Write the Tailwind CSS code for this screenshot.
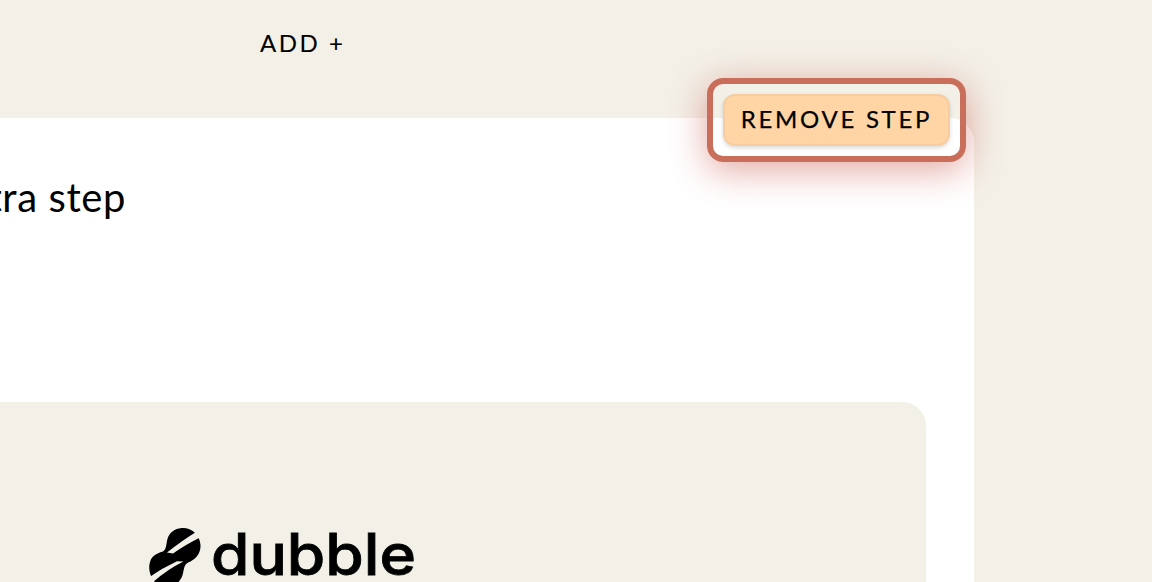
<!DOCTYPE html>
<html lang="en">
<head>
    <meta charset="UTF-8">
    <meta name="viewport" content="width=device-width, initial-scale=1.0">
    <title>Edit steps</title>
    <script src="https://cdn.jsdelivr.net/npm/@tailwindcss/browser@4"></script>
</head>
<body class="bg-[#f3f0e8] text-black overflow-hidden font-['Lato',sans-serif]">
    <div class="relative w-full h-[582px] overflow-hidden flex flex-col">

        <!-- Add step -->
        <header class="h-[118px] shrink-0 flex items-start pl-[260px] pt-[27px]">
            <button class="text-[24px] leading-8 tracking-[2.5px] font-normal whitespace-nowrap [-webkit-text-stroke:0.1px_black]">ADD +</button>
        </header>

        <!-- Step card -->
        <main class="w-[974px] flex-1 bg-white rounded-tr-3xl flex flex-col">
            <div class="h-[284px] shrink-0 pt-[51px] w-[126px] flex justify-end items-start">
                <h1 class="text-[40px] leading-[56px] tracking-[0.6px] whitespace-nowrap">extra step</h1>
            </div>

            <div class="w-[926px] flex-1 bg-[#f3f0e8] rounded-tr-3xl pt-[118px] pl-[140px] overflow-hidden">
                <!-- Logo -->
                <svg class="block" width="290" height="62" viewBox="0 0 290 62">
                    <path fill="#000" d="M43 8 C52 8 60 15 60.500 25 C61 34 55 40 48 42.500 C42 46 45 54 40 60 C36 67 23 70 15 62 C10 57 8 48 10 42 C12 35 18 33 23 31.500 C28 28 25 20 30 14 C33 10 38 8 43 8 Z"/>
                    <path fill="#f3f0e8" d="M56 12 Q43 20 27 32.500 L33 33.500 Q44 25.500 61 17 Z"/>
                    <path fill="#f3f0e8" d="M8 58 Q22 48 37 41.200 L43.500 41.500 Q27 49.500 12 63 Z"/>
                    <text x="71" y="54.5" font-family="Inter, sans-serif" font-size="57" font-weight="500" stroke="#000" stroke-width="0.8" textLength="205" lengthAdjust="spacingAndGlyphs">dubble</text>
                </svg>
            </div>
        </main>

        <!-- Highlighted remove button, lies over the card's corner -->
        <div class="absolute left-[707px] top-[78px] w-[259px] h-[84px] border-6 border-[#c96e5b] rounded-2xl p-2.5 shadow-[0_8px_36px_rgba(190,60,45,0.45)]">
            <button class="w-[227px] h-[52px] rounded-xl border-2 border-[#f5cda1] bg-[#ffd5a6] shadow-[0_2px_4px_rgba(0,0,0,0.15)] text-[24px] leading-none tracking-[2.7px] pb-0.5 font-normal whitespace-nowrap [-webkit-text-stroke:0.25px_black]">REMOVE STEP</button>
        </div>
    </div>
</body>
</html>
